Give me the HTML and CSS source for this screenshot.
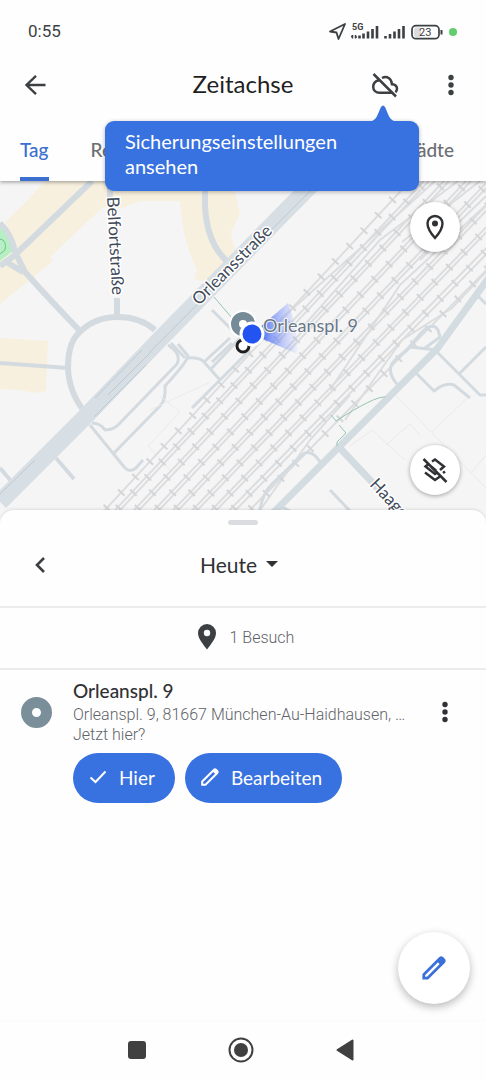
FILE: index.html
```
<!DOCTYPE html>
<html lang="de">
<head>
  <meta charset="UTF-8" />
  <meta name="viewport" content="width=device-width, initial-scale=1.0" />
  <title>Zeitachse</title>
  <link rel="stylesheet" href="styles.css">
</head>
<body>
  <div class="status-bar">
    <span class="clock">0:55</span>
    <svg class="status-icons" width="132" height="20" viewBox="0 0 132 20">
      <path d="M2 10.500L17 3 10.500 18 8.500 11.500Z" fill="none" stroke="#3c4043" stroke-width="1.800" stroke-linejoin="round" />
      <text x="24" y="9" class="net">5G</text>
      <path d="M24.500 14v3.500M27.500 14v3.500M23 15.500h2M27 16h2" stroke="#3c4043" stroke-width="1.500" />
      <path d="M31.500 17.500v-3M35.500 17.500v-5M40 17.500v-7M44.500 17.500v-9.500M49 17.500V5" stroke="#3c4043" stroke-width="2.600" />
      <path d="M57.500 17.500v-2.500M62 17.500v-4.500M66.500 17.500v-7M71 17.500v-9.500M75.500 17.500V5" stroke="#3c4043" stroke-width="2.600" />
      <rect x="84" y="4.700" width="27" height="13" rx="4" fill="none" stroke="#3c4043" stroke-width="1.700" />
      <rect x="86" y="6.500" width="7" height="9.500" rx="2" fill="#dcdcdc" />
      <path d="M113.500 9v4.500" stroke="#3c4043" stroke-width="2" />
      <text x="91" y="15" class="battery">23</text>
      <circle cx="125" cy="11" r="4" fill="#63cc70" />
    </svg>
  </div>

  <header>
    <div class="app-bar">
      <button class="icon-btn" aria-label="Zurück">
        <svg width="24" height="24" viewBox="0 0 24 24"><path d="M22.500 12H4M13 2.800L3.500 12 13 21.200" fill="none" stroke="#3c4043" stroke-width="2.400" /></svg>
      </button>
      <h1>Zeitachse</h1>
      <div class="actions">
        <button class="icon-btn" aria-label="Sicherung">
          <svg width="28" height="28" viewBox="0 0 28 28" fill="none" stroke="#3c4043" stroke-width="2.500">
            <path d="M2.500 3L25 25.500" />
            <path d="M8 9.500C4.500 9.500 2.200 12.500 2.200 15.800c0 3.600 2.800 6 6.300 6h13" />
            <path d="M11 7c5-2.500 9.500.5 10 6.300 3 .2 5 1.900 5 4.500 0 1.400-.5 2.500-1.600 3.400" />
          </svg>
        </button>
        <button class="icon-btn" aria-label="Mehr">
          <svg width="8" height="24" viewBox="0 0 8 24" fill="#3c4043"><circle cx="4" cy="4.500" r="2.700" /><circle cx="4" cy="12" r="2.700" /><circle cx="4" cy="19.500" r="2.700" /></svg>
        </button>
      </div>
    </div>
    <nav class="tabs">
      <a href="#" class="active">Tag</a>
      <a href="#">Reisen</a>
      <a href="#">Städte</a>
    </nav>
    <div class="tooltip">
      Sicherungseinstellungen ansehen
      <svg class="tip" width="28" height="17" viewBox="0 0 28 17"><path d="M0 17C8 16 9 8 12 2q2-3 4 0c3 6 4 14 12 15z" fill="#3871e0" /></svg>
    </div>
  </header>

  <section class="map">
    <svg class="map-canvas" viewBox="0 181 486 343" preserveAspectRatio="xMidYMin slice">
      <defs>
        <linearGradient id="beam" x1="0" x2="1">
          <stop offset="0.200" stop-color="#3f63f2" stop-opacity=".9" />
          <stop offset="1" stop-color="#8fa6ff" stop-opacity=".1" />
        </linearGradient>
      </defs>

      <rect y="181" width="486" height="343" fill="#f6f5f6" />

      <g fill="#f7f0de">
        <path d="M45 181H215L235 192 240 214 231 232Q232 246 240 257L212 284 194 279 197 270Q182 240 180 201H140L122 208 103 207 50 257 53 261 0 304V250L8 226 5 222 24 204Z" />
        <path d="M0 338L48 341 46 391 34 393 20 390 0 389Z" />
      </g>
      <path d="M0 222Q10 231 13 246L13 251 0 261Z" fill="#b6efc4" />
      <path d="M0 239Q7 240 5 250L0 254" fill="none" stroke="#77c08d" />

      <!-- streets -->
      <g class="street">
        <path d="M0 223Q12 235 15 252L25 272Q50 300 80 331" stroke-width="6" />
        <path d="M92 181L15 255 0 266M8 263L23 272" stroke-width="6" />
        <path d="M110 181V205M117 298V317" stroke-width="6" />
        <path d="M205 181V206Q207 245 229 263" stroke-width="6" />
        <path d="M155 330Q140 317 118 317 92 317 76 336 68 346 68 368 69 392 84 411" stroke-width="6" />
        <path d="M0 363L68 368M0 468L11 481M56 458L74 479" stroke-width="4" />
        <path d="M212 310L236 334M171 343L185 358M232 343L212 362" stroke-width="3" />
      </g>
      <path d="M0 502L85 417 165 334 315 181" fill="none" stroke="#d7dfe4" stroke-width="17" />
      <path d="M95 398L142 350M94 417L146 365M108 395L151 352M0 494L35 460M150 352L320 181" fill="none" stroke="#bfc9d0" stroke-width="1" />

      <g class="lane">
        <path d="M168 345Q182 354 177 364L120 423Q114 430 105 430 100 423 92 423" />
        <path d="M178 344L188 356Q187 362 165 386 166 400 160 406L114 453" />
        <path d="M90 425L125 468Q130 473 136 468L143 460M188 358Q199 357 204 362L220 380 192 408M204 362L230 338M210 370L240 338M220 380L250 350" />
      </g>
      <path d="M160 396L180 412 148 446 170 470M150 410L210 382" fill="none" stroke="#ebebed" />

      <!-- railway tracks, every second one carries ties -->
      <g class="rail-line">
        <path d="M92 524L410 181M102 524L424 181M107 524L429 181M121 524L444 181M126 524L449 181M141 524L466 181" />
        <path d="M146 524L471 181M160 524L488 181M165 524L493 181M179 524L510 181M184 524L515 181M198 524L531 181" />
        <path d="M203 524L536 181M216 524L552 181M222 524L558 181M236 524L574 181" />
        <path d="M280 320L345 262 435 181M300 330L380 240 458 181M330 390L400 285 486 205M250 524L310 440 350 395M345 420L402 340 452 308 486 272M402 242L480 181M420 260L486 196" />
      </g>
      <g class="rail-tie">
        <path d="M92 524L410 181M104 524L426 181M123 524L446 181M143 524L468 181M162 524L490 181M181 524L512 181M200 524L533 181M219 524L555 181M236 524L574 181" />
      </g>

      <g class="lane">
        <path d="M258 524Q260 495 272 484L300 457Q310 446 320 462M278 505L296 514M330 490L350 511" />
        <path d="M397 384Q385 370 395 360L410 347 438 350M415 372L434 391Q445 382 454 385L470 398M437 352L480 395 486 395M460 373L486 347" />
        <path d="M405 352L421 333Q433 321 438 330L440 337 425 348M475 293L486 304" />
      </g>
      <path d="M262 524L340 446 437 349 490 276" fill="none" stroke="#d3dce1" stroke-width="7" />
      <path d="M338 446L372 482 405 520" fill="none" stroke="#d3dce1" stroke-width="7" />
      <path d="M385 397Q375 396 336 421L331 415M339 425L346 433 337 442V446M214 297L232 318" fill="none" stroke="#94c5ae" />
      <path d="M395 395L486 488M350 446L372 430 405 460M386 445L410 424 420 435M432 432L466 399M472 472L486 455" fill="none" stroke="#e9e9ec" />

      <path d="M252 334L288 303Q298 328 297 354Z" fill="url(#beam)" />

      <g class="map-label">
        <text transform="translate(107 197) rotate(87)">Belfortstraße</text>
        <text transform="translate(199 306) rotate(-45)">Orleansstraße</text>
        <text transform="translate(369 485) rotate(47)">Haager</text>
        <text x="263" y="332" class="place">Orleanspl. 9</text>
      </g>

      <circle cx="243" cy="346" r="6" fill="#fff" stroke="#1f1f1f" stroke-width="3" />
      <circle cx="243" cy="324" r="13" fill="#768b98" stroke="#fff" stroke-width="2" />
      <circle cx="243" cy="324" r="4" fill="#fff" />
      <circle cx="252" cy="334" r="11" fill="#2354f2" stroke="#fff" stroke-width="3" />
    </svg>

    <div class="map-buttons">
      <button class="round-btn" aria-label="Ort">
        <svg width="20" height="26" viewBox="0 0 20 26"><path d="M10 24C6 19.500 2.500 14.800 2.500 9.500a7.500 7.500 0 0 1 15 0C17.500 14.800 14 19.500 10 24Z" fill="none" stroke="#303134" stroke-width="2.400" /><circle cx="10" cy="9.500" r="3" fill="#303134" /></svg>
      </button>
      <button class="round-btn" aria-label="Ebenen ausblenden">
        <svg width="26" height="26" viewBox="0 0 26 26" fill="none" stroke="#303134" stroke-width="2.500">
          <path d="M1.500 2L24.500 25" />
          <path d="M10 4.500L13 2.500 22 9.500 18 13M6.500 7L3.500 9.500 13 17 15.500 15.200M9.500 10L14 13.500M3 15.500L13 23 18 19.500M21 16L23 14.500" />
        </svg>
      </button>
    </div>
  </section>

  <main class="sheet">
    <div class="handle"></div>
    <div class="day-row">
      <button class="icon-btn" aria-label="Vorheriger Tag">
        <svg width="12" height="18" viewBox="0 0 12 18"><path d="M10 2L3 9l7 7" fill="none" stroke="#3c4043" stroke-width="2.600" /></svg>
      </button>
      <button class="day">Heute
        <svg width="12" height="6" viewBox="0 0 12 6"><path d="M0 0h12L6 6z" fill="#303134" /></svg>
      </button>
    </div>
    <div class="summary">
      <svg width="18" height="26" viewBox="0 0 18 26"><path d="M9 25.500C5 20 0 14.500 0 9a9 9 0 0 1 18 0c0 5.500-5 11-9 16.500zM9 5.800a3.200 3.200 0 1 0 0 6.400 3.200 3.200 0 0 0 0-6.400z" fill="#3c4043" /></svg>
      <span>1 Besuch</span>
    </div>

    <article class="visit">
      <div class="dot"></div>
      <div class="info">
        <h2>Orleanspl. 9</h2>
        <p>Orleanspl. 9, 81667 München-Au-Haidhausen, …</p>
        <p>Jetzt hier?</p>
      </div>
      <button class="icon-btn more" aria-label="Optionen">
        <svg width="8" height="24" viewBox="0 0 8 24" fill="#303134"><circle cx="4" cy="4.500" r="2.700" /><circle cx="4" cy="12" r="2.700" /><circle cx="4" cy="19.500" r="2.700" /></svg>
      </button>
      <div class="buttons">
        <button class="pill">
          <svg width="18" height="14" viewBox="0 0 18 14"><path d="M1.500 7.500L6.500 12 16.500 1.500" fill="none" stroke="#fff" stroke-width="2" /></svg>
          Hier
        </button>
        <button class="pill">
          <svg width="18" height="18" viewBox="0 0 18 18"><path d="M1.200 16.800v-3.300L13 1.700q1-.8 2 0l1.300 1.300q.8 1 0 2L4.500 16.800z" fill="none" stroke="#fff" stroke-width="2" /><path d="M11.500 3.200L14 .8l3.200 3.200-2.400 2.500z" fill="#fff" /></svg>
          Bearbeiten
        </button>
      </div>
    </article>

    <button class="fab" aria-label="Bearbeiten">
      <svg width="24" height="24" viewBox="0 0 24 24"><path d="M1.800 22.200v-3.700L18 2.300q1.200-1 2.400 0l1.300 1.300q1 1.200 0 2.400L5.500 22.200z" fill="none" stroke="#3b70da" stroke-width="2.800" /><path d="M14.500 5L18.500 1.500l4 4-3.500 4z" fill="#3b70da" /></svg>
    </button>
  </main>

  <footer class="nav-bar">
    <button aria-label="Letzte Apps"><svg width="18" height="18"><rect width="18" height="18" rx="3" fill="#404040" /></svg></button>
    <button aria-label="Startbildschirm"><svg width="26" height="26"><circle cx="13" cy="13" r="11.500" fill="none" stroke="#404040" stroke-width="2" /><circle cx="13" cy="13" r="7" fill="#404040" /></svg></button>
    <button aria-label="Zurück"><svg width="18" height="22"><path d="M1.500 11L16.500 1.500v19z" fill="#404040" stroke="#404040" stroke-width="2" stroke-linejoin="round" /></svg></button>
  </footer>
</body>
</html>
```
FILE: styles.css
```
* {
  box-sizing: border-box;
  margin: 0;
  padding: 0;
}

body {
  font-family: Lato, 'Open Sans', sans-serif;
  background: #fefefe;
  color: #303134;
  display: flex;
  flex-direction: column;
  min-height: 100vh;
}

button {
  border: none;
  background: none;
  font-family: inherit;
  color: inherit;
  cursor: pointer;
}

svg {
  display: block;
}

.status-bar {
  position: relative;
  z-index: 3;
  height: 60px;
  padding: 2px 26px 0 28px;
  background: #fefefe;
  display: flex;
  align-items: center;
  justify-content: space-between;
}

.clock {
  font: 17px Roboto, sans-serif;
  color: #3c4043;
}

.net {
  font: bold 9px Roboto, sans-serif;
  fill: #3c4043;
}

.battery {
  font: 11px Roboto, sans-serif;
  fill: #3c4043;
}

/* header */
header {
  position: relative;
  z-index: 2;
  height: 121px;
  background: #fefefe;
  box-shadow: 0 1px 4px rgba(0, 0, 0, 0.4);
}

.app-bar {
  height: 50px;
  padding: 0 15px;
  display: grid;
  grid-template-columns: 1fr auto 1fr;
  align-items: center;
}

h1 {
  padding-bottom: 4px;
  font-size: 24px;
  font-weight: 400;
  color: #1f1f1f;
}

.icon-btn {
  width: 40px;
  height: 40px;
  display: flex;
  align-items: center;
  justify-content: center;
}

.actions {
  display: flex;
  justify-content: flex-end;
  gap: 26px;
}

.tabs {
  height: 71px;
  padding: 0 32px 0 20px;
  display: flex;
  gap: 42px;
}

.tabs a {
  padding-top: 10px;
  line-height: 60px;
  font-size: 19px;
  font-weight: 500;
  color: #6b6e72;
  text-decoration: none;
}

.tabs a:last-child {
  margin-left: auto;
}

.tabs .active {
  color: #3b6fd0;
  border-bottom: 4px solid #3b6fd0;
  border-radius: 3px 3px 0 0;
}

.tooltip {
  position: absolute;
  top: 61px;
  right: 67px;
  width: 314px;
  padding: 8px 20px 12px;
  border-radius: 9px;
  background: #3871e0;
  color: #fff;
  font-size: 20px;
  line-height: 25px;
  box-shadow: 0 1px 4px rgba(0, 0, 0, 0.3);
}

.tip {
  position: absolute;
  top: -16px;
  right: 22px;
}

/* map */
.map {
  position: relative;
  height: 343px;
}

.map-canvas {
  width: 100%;
  height: 100%;
}

.street,
.lane {
  fill: none;
  stroke: #d3dbe0;
  stroke-linejoin: round;
}

.lane {
  stroke-width: 3px;
}

.rail-line {
  fill: none;
  stroke: #dcdddf;
  stroke-width: 2px;
}

.rail-tie {
  fill: none;
  stroke: #d3d5d7;
  stroke-width: 9px;
  stroke-dasharray: 2 19;
}

.map-label {
  font-size: 17px;
  fill: #3f4a59;
  stroke: #fff;
  stroke-width: 3px;
  paint-order: stroke;
}

.place {
  font-size: 18px;
  fill: #66788a;
  stroke: #f6f5f6;
  stroke-width: 2px;
}

.map-buttons {
  position: absolute;
  top: 21px;
  bottom: 29px;
  right: 26px;
  display: flex;
  flex-direction: column;
  justify-content: space-between;
}

.round-btn {
  width: 50px;
  height: 50px;
  border-radius: 50%;
  background: #fff;
  display: flex;
  align-items: center;
  justify-content: center;
  box-shadow: 0 1px 4px rgba(0, 0, 0, 0.35);
}

/* bottom sheet */
.sheet {
  position: relative;
  flex: 1;
  margin-top: -14px;
  border-radius: 14px 14px 0 0;
  background: #fefefe;
  box-shadow: 0 -1px 3px rgba(0, 0, 0, 0.1);
}

.handle {
  width: 30px;
  height: 5px;
  margin: 0 auto;
  border-radius: 3px;
  background: #dadce0;
  position: relative;
  top: 10px;
}

.day-row {
  height: 93px;
  padding: 9px 20px 0;
  display: grid;
  grid-template-columns: 40px 1fr 40px;
  align-items: center;
  border-bottom: 2px solid #ececec;
}

.day {
  display: flex;
  align-items: center;
  justify-content: center;
  gap: 9px;
  padding: 0 8px 2px 0;
  font-size: 21px;
}

.summary {
  height: 62px;
  padding: 0 0 2px 6px;
  display: flex;
  align-items: center;
  justify-content: center;
  gap: 14px;
  border-bottom: 2px solid #ececec;
  font: 300 16px Roboto, sans-serif;
  color: #5f6368;
}

.visit {
  padding: 9px 21px;
  display: grid;
  grid-template-columns: 52px 1fr 56px;
  align-items: center;
}

.dot {
  width: 31px;
  height: 31px;
  border: 11px solid #7b8f9b;
  border-radius: 50%;
}

.info {
  min-width: 0;
}

h2 {
  padding-bottom: 2px;
  font-size: 19px;
  font-weight: 500;
  line-height: 24px;
}

.info p {
  font: 300 16px/20px Roboto, sans-serif;
  color: #5f6368;
  white-space: nowrap;
  overflow: hidden;
  text-overflow: ellipsis;
}

.more {
  justify-self: end;
}

.buttons {
  grid-column: 2 / 4;
  margin-top: 8px;
  display: flex;
  gap: 10px;
}

.pill {
  height: 50px;
  padding: 0 20px 2px 16px;
  border-radius: 25px;
  background: #3871e0;
  color: #fff;
  display: flex;
  align-items: center;
  gap: 12px;
  font-size: 19px;
}

.fab {
  position: absolute;
  right: 16px;
  bottom: 16px;
  width: 72px;
  height: 72px;
  border-radius: 50%;
  background: #fff;
  display: flex;
  align-items: center;
  justify-content: center;
  box-shadow: 0 3px 8px rgba(0, 0, 0, 0.28);
}

.nav-bar {
  height: 60px;
  padding-right: 4px;
  display: flex;
  justify-content: center;
  gap: 64px;
}

.nav-bar button {
  width: 40px;
  height: 60px;
  display: flex;
  align-items: center;
  justify-content: center;
}
```
